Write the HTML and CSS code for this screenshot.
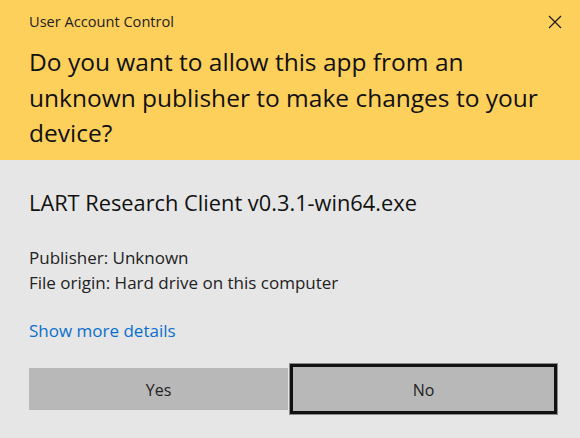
FILE: index.html
```html
<!DOCTYPE html>
<html>
<head>
<meta charset="utf-8">
<link rel="stylesheet" href="styles.css">
</head>
<body>
<div class="dialog">
  <div class="header">
    <div class="titlebar">
      <span class="title">User Account Control</span>
      <svg class="close" width="14" height="14" viewBox="0 0 14 14"><path d="M1 1L13 13M13 1L1 13" stroke="#1a1a1a" stroke-width="1.2" fill="none"/></svg>
    </div>
    <div class="question">Do you want to allow this app from an unknown publisher to make changes to your device?</div>
  </div>
  <div class="body">
    <div class="app">LART Research Client v0.3.1-win64.exe</div>
    <div class="info">
      <div>Publisher: Unknown</div>
      <div>File origin: Hard drive on this computer</div>
    </div>
    <a class="more" href="#">Show more details</a>
    <div class="buttons">
      <button class="btn">Yes</button>
      <button class="btn focused">No</button>
    </div>
  </div>
</div>
</body>
</html>
```
FILE: styles.css
```css
* { box-sizing: border-box; }
html, body { margin: 0; padding: 0; }
body {
  width: 580px;
  height: 438px;
  background: #e6e6e6;
  font-family: "Open Sans", "Noto Sans", sans-serif;
  color: #1a1a1a;
  overflow: hidden;
}
.dialog { display: flex; flex-direction: column; height: 438px; }
.header {
  background: #fdd05c;
  height: 160px;
  padding: 10px 18px 0 29px;
}
.titlebar {
  display: flex;
  justify-content: space-between;
  align-items: center;
  height: 22px;
}
.title { font-size: 14.6px; color: #222; }
.close { margin-top: 2px; }
.question {
  margin-top: 12px;
  font-size: 24.5px;
  line-height: 35.5px;
  color: #111;
  width: 525px;
}
.body { padding: 0 23px 0 29px; flex: 1; display: flex; flex-direction: column; }
.app { margin-top: 29px; font-size: 21.8px; line-height: 28px; color: #111; }
.info { margin-top: 27.5px; font-size: 17px; line-height: 25px; color: #222; }
.more {
  margin-top: 24.5px;
  font-size: 17px;
  line-height: 24px;
  color: #0a6fcc;
  text-decoration: none;
  align-self: flex-start;
}
.buttons {
  margin-top: 21px;
  display: flex;
  align-items: center;
  gap: 2px;
}
.btn {
  font-family: inherit;
  font-size: 16px;
  color: #222;
  background: #b8b8b8;
  border: none;
  height: 42px;
  width: 259px;
  padding: 2px 0 0;
}
.focused {
  width: 267px;
  height: 50px;
  border: 3px solid #111;
  box-shadow: 0 0 0 1px #8a8a8a;
}
```
